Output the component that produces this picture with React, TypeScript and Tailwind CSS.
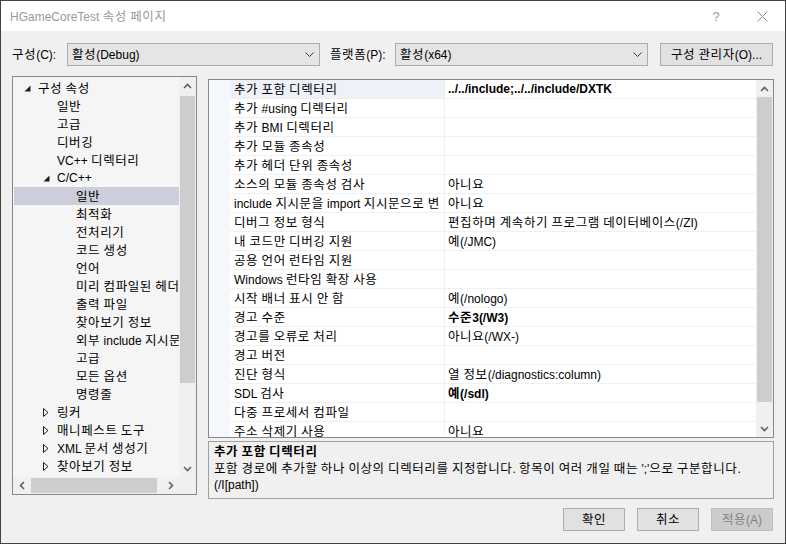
import React from 'react';

const HANGUL = /([\uAC00-\uD7A3\u3131-\u318E]+)/;

function T({ s }: { s: string }) {
  const parts = s.split(HANGUL);
  return (
    <>
      {parts.map((p, i) =>
        i % 2 === 1 ? (
          <span key={i} className="font-['Noto_Sans_CJK_KR',sans-serif] text-[12.5px] tracking-[0.6px]">
            {p}
          </span>
        ) : (
          <React.Fragment key={i}>{p}</React.Fragment>
        )
      )}
    </>
  );
}

const treeItems: { t: string; lvl: 0 | 1 | 2; exp?: 'open' | 'closed'; sel?: boolean }[] = [
  { t: '구성 속성', lvl: 0, exp: 'open' },
  { t: '일반', lvl: 1 },
  { t: '고급', lvl: 1 },
  { t: '디버깅', lvl: 1 },
  { t: 'VC++ 디렉터리', lvl: 1 },
  { t: 'C/C++', lvl: 1, exp: 'open' },
  { t: '일반', lvl: 2, sel: true },
  { t: '최적화', lvl: 2 },
  { t: '전처리기', lvl: 2 },
  { t: '코드 생성', lvl: 2 },
  { t: '언어', lvl: 2 },
  { t: '미리 컴파일된 헤더', lvl: 2 },
  { t: '출력 파일', lvl: 2 },
  { t: '찾아보기 정보', lvl: 2 },
  { t: '외부 include 지시문', lvl: 2 },
  { t: '고급', lvl: 2 },
  { t: '모든 옵션', lvl: 2 },
  { t: '명령줄', lvl: 2 },
  { t: '링커', lvl: 1, exp: 'closed' },
  { t: '매니페스트 도구', lvl: 1, exp: 'closed' },
  { t: 'XML 문서 생성기', lvl: 1, exp: 'closed' },
  { t: '찾아보기 정보', lvl: 1, exp: 'closed' },
];

const padByLvl: Record<number, string> = { 0: 'pl-[10px]', 1: 'pl-[29px]', 2: 'pl-[48px]' };

const props: { n: string; v: string; b?: boolean }[] = [
  { n: '추가 포함 디렉터리', v: '../../include;../../include/DXTK', b: true },
  { n: '추가 #using 디렉터리', v: '' },
  { n: '추가 BMI 디렉터리', v: '' },
  { n: '추가 모듈 종속성', v: '' },
  { n: '추가 헤더 단위 종속성', v: '' },
  { n: '소스의 모듈 종속성 검사', v: '아니요' },
  { n: 'include 지시문을 import 지시문으로 변', v: '아니요' },
  { n: '디버그 정보 형식', v: '편집하며 계속하기 프로그램 데이터베이스(/ZI)' },
  { n: '내 코드만 디버깅 지원', v: '예(/JMC)' },
  { n: '공용 언어 런타임 지원', v: '' },
  { n: 'Windows 런타임 확장 사용', v: '' },
  { n: '시작 배너 표시 안 함', v: '예(/nologo)' },
  { n: '경고 수준', v: '수준3(/W3)', b: true },
  { n: '경고를 오류로 처리', v: '아니요(/WX-)' },
  { n: '경고 버전', v: '' },
  { n: '진단 형식', v: '열 정보(/diagnostics:column)' },
  { n: 'SDL 검사', v: '예(/sdl)', b: true },
  { n: '다중 프로세서 컴파일', v: '' },
  { n: '주소 삭제기 사용', v: '아니요' },
];

function ChevUp() {
  return (
    <svg width="9" height="6" viewBox="0 0 9 6">
      <path d="M1 5 L4.5 1.5 L8 5" fill="none" stroke="#606060" strokeWidth="1.6" />
    </svg>
  );
}
function ChevDown() {
  return (
    <svg width="9" height="6" viewBox="0 0 9 6">
      <path d="M1 1 L4.5 4.5 L8 1" fill="none" stroke="#606060" strokeWidth="1.6" />
    </svg>
  );
}
function ChevLeft() {
  return (
    <svg width="6" height="9" viewBox="0 0 6 9">
      <path d="M5 1 L1.5 4.5 L5 8" fill="none" stroke="#606060" strokeWidth="1.6" />
    </svg>
  );
}
function ChevRight() {
  return (
    <svg width="6" height="9" viewBox="0 0 6 9">
      <path d="M1 1 L4.5 4.5 L1 8" fill="none" stroke="#606060" strokeWidth="1.6" />
    </svg>
  );
}
function ComboChev() {
  return (
    <svg width="9" height="5" viewBox="0 0 9 5">
      <path d="M0.5 0.5 L4.5 4.5 L8.5 0.5" fill="none" stroke="#333" strokeWidth="1" />
    </svg>
  );
}

function Combo({ text }: { text: string }) {
  return (
    <div className="w-[253px] h-[23px] bg-[#e5e5e5] border border-[#acacac] flex items-center pl-[4px] pr-[5px]">
      <span className="flex-1 leading-none">
        <T s={text} />
      </span>
      <ComboChev />
    </div>
  );
}

function Btn({ text, w, disabled }: { text: string; w: string; disabled?: boolean }) {
  return (
    <div
      className={
        disabled
          ? `${w} h-[23px] bg-[#cccccc] border border-[#bfbfbf] text-[#838383] flex items-center justify-center leading-none`
          : `${w} h-[23px] bg-[#e1e1e1] border border-[#adadad] text-black flex items-center justify-center leading-none`
      }
    >
      <span>
        <T s={text} />
      </span>
    </div>
  );
}

function Tree() {
  return (
    <div className="w-[185px] h-[419px] border border-[#828790] flex flex-col">
      <div className="flex flex-1 min-h-0">
        <div className="flex-1 min-w-0 overflow-hidden bg-[#f5f5f5] pt-[2px]">
          {treeItems.map((it, i) => (
            <div
              key={i}
              className={`h-[18px] flex items-center whitespace-nowrap ${padByLvl[it.lvl]} ${
                it.sel ? 'bg-[#cccedb] ml-[1px]' : ''
              }`}
            >
              <div className={`w-[15px] h-[18px] shrink-0 flex items-center ${it.sel ? '-ml-[1px]' : ''}`}>
                {it.exp === 'open' && (
                  <svg width="7" height="7" viewBox="0 0 7 7" className="ml-[1px] mt-[1px]">
                    <polygon points="6.5,0.5 6.5,6.5 0.5,6.5" fill="#1e1e1e" />
                  </svg>
                )}
                {it.exp === 'closed' && (
                  <svg width="6" height="9" viewBox="0 0 6 9" className="ml-[1px]">
                    <polygon points="0.5,0.5 5,4.5 0.5,8.5" fill="none" stroke="#1e1e1e" strokeWidth="1" />
                  </svg>
                )}
              </div>
              <span className="leading-none text-black">
                <T s={it.t} />
              </span>
            </div>
          ))}
        </div>
        <div className="w-[17px] bg-[#f0f0f0] flex flex-col items-center">
          <div className="h-[17px] w-full flex items-center justify-center">
            <ChevUp />
          </div>
          <div className="flex-1 w-full px-[1px]">
            <div className="mt-[2px] h-[287px] bg-[#cdcdcd]" />
          </div>
          <div className="h-[17px] w-full flex items-center justify-center">
            <ChevDown />
          </div>
        </div>
      </div>
      <div className="h-[17px] flex">
        <div className="flex-1 bg-[#f0f0f0] flex items-center">
          <div className="w-[17px] h-[17px] flex items-center justify-center">
            <ChevLeft />
          </div>
          <div className="ml-[1px] w-[126px] h-[15px] bg-[#cdcdcd]" />
          <div className="flex-1" />
          <div className="w-[17px] h-[17px] flex items-center justify-center">
            <ChevRight />
          </div>
        </div>
        <div className="w-[17px] bg-[#f0f0f0]" />
      </div>
    </div>
  );
}

function Grid() {
  return (
    <div className="w-[566px] h-[359px] border border-[#828790] flex bg-white">
      <div className="flex-1 min-w-0 flex overflow-hidden">
        <div className="w-[21px] shrink-0 bg-[#f5f7fb]" />
        <div className="flex-1 min-w-0 flex flex-col">
          {props.map((p, i) => (
            <div key={i} className="h-[19px] shrink-0 flex border-b border-[#edf0f5]">
              <div
                className={`w-[215px] shrink-0 overflow-hidden whitespace-nowrap pl-[4px] flex items-center border-r border-[#edf0f5] ${
                  i === 0 ? 'bg-[#eef2f8]' : ''
                }`}
              >
                <span className="leading-none">
                  <T s={p.n} />
                </span>
              </div>
              <div className="flex-1 min-w-0 overflow-hidden whitespace-nowrap pl-[3px] flex items-center">
                <span className={`leading-none ${p.b ? 'font-bold' : ''}`}>
                  <T s={p.v} />
                </span>
              </div>
            </div>
          ))}
        </div>
      </div>
      <div className="w-[17px] bg-[#f0f0f0] flex flex-col">
        <div className="h-[17px] w-full flex items-center justify-center">
          <ChevUp />
        </div>
        <div className="flex-1 w-full px-[1px]">
          <div className="h-[305px] bg-[#cdcdcd]" />
        </div>
        <div className="h-[17px] w-full flex items-center justify-center">
          <ChevDown />
        </div>
      </div>
    </div>
  );
}

export default function App() {
  return (
    <div className="w-[786px] h-[544px] bg-[#f0f0f0] border border-[#434343] flex flex-col text-[12px] text-black font-['Liberation_Sans','Noto_Sans_CJK_KR',sans-serif] overflow-hidden">
      {/* title bar */}
      <div className="h-[30px] shrink-0 bg-white flex items-center pl-[9px]">
        <span className="text-[#999999] leading-none">
          <T s="HGameCoreTest 속성 페이지" />
        </span>
        <div className="flex-1" />
        <div className="w-[46px] h-[30px] flex items-center justify-center text-[#999999] text-[13px] leading-none">?</div>
        <div className="w-[46px] h-[30px] flex items-center justify-center">
          <svg width="11" height="11" viewBox="0 0 11 11">
            <path d="M0.5 0.5 L10.5 10.5 M10.5 0.5 L0.5 10.5" stroke="#8a8a8a" strokeWidth="1" />
          </svg>
        </div>
      </div>

      {/* toolbar */}
      <div className="mt-[12px] h-[23px] shrink-0 flex items-center pl-[11px]">
        <div className="w-[55px] leading-none">
          <T s="구성(C):" />
        </div>
        <Combo text="활성(Debug)" />
        <div className="w-[65px] ml-[10px] leading-none">
          <T s="플랫폼(P):" />
        </div>
        <Combo text="활성(x64)" />
        <div className="ml-[12px]">
          <Btn text="구성 관리자(O)..." w="w-[113px]" />
        </div>
      </div>

      {/* main */}
      <div className="mt-[10px] h-[423px] shrink-0 flex pl-[11px]">
        <Tree />
        <div className="ml-[11px] pt-[3px] flex flex-col">
          <Grid />
          <div className="mt-[3px] w-[566px] h-[58px] border border-[#a0a0a0] bg-[#f0f0f0] pl-[5px] pt-[1px] leading-[16px]">
            <div className="font-bold">
              <T s="추가 포함 디렉터리" />
            </div>
            <div>
              <T s="포함 경로에 추가할 하나 이상의 디렉터리를 지정합니다. 항목이 여러 개일 때는 ';'으로 구분합니다." />
              <br />
              (/I[path])
            </div>
          </div>
        </div>
      </div>

      {/* buttons */}
      <div className="mt-[9px] h-[23px] shrink-0 flex justify-end pr-[12px] gap-[12px]">
        <Btn text="확인" w="w-[62px]" />
        <Btn text="취소" w="w-[62px]" />
        <Btn text="적용(A)" w="w-[62px]" disabled />
      </div>
    </div>
  );
}
